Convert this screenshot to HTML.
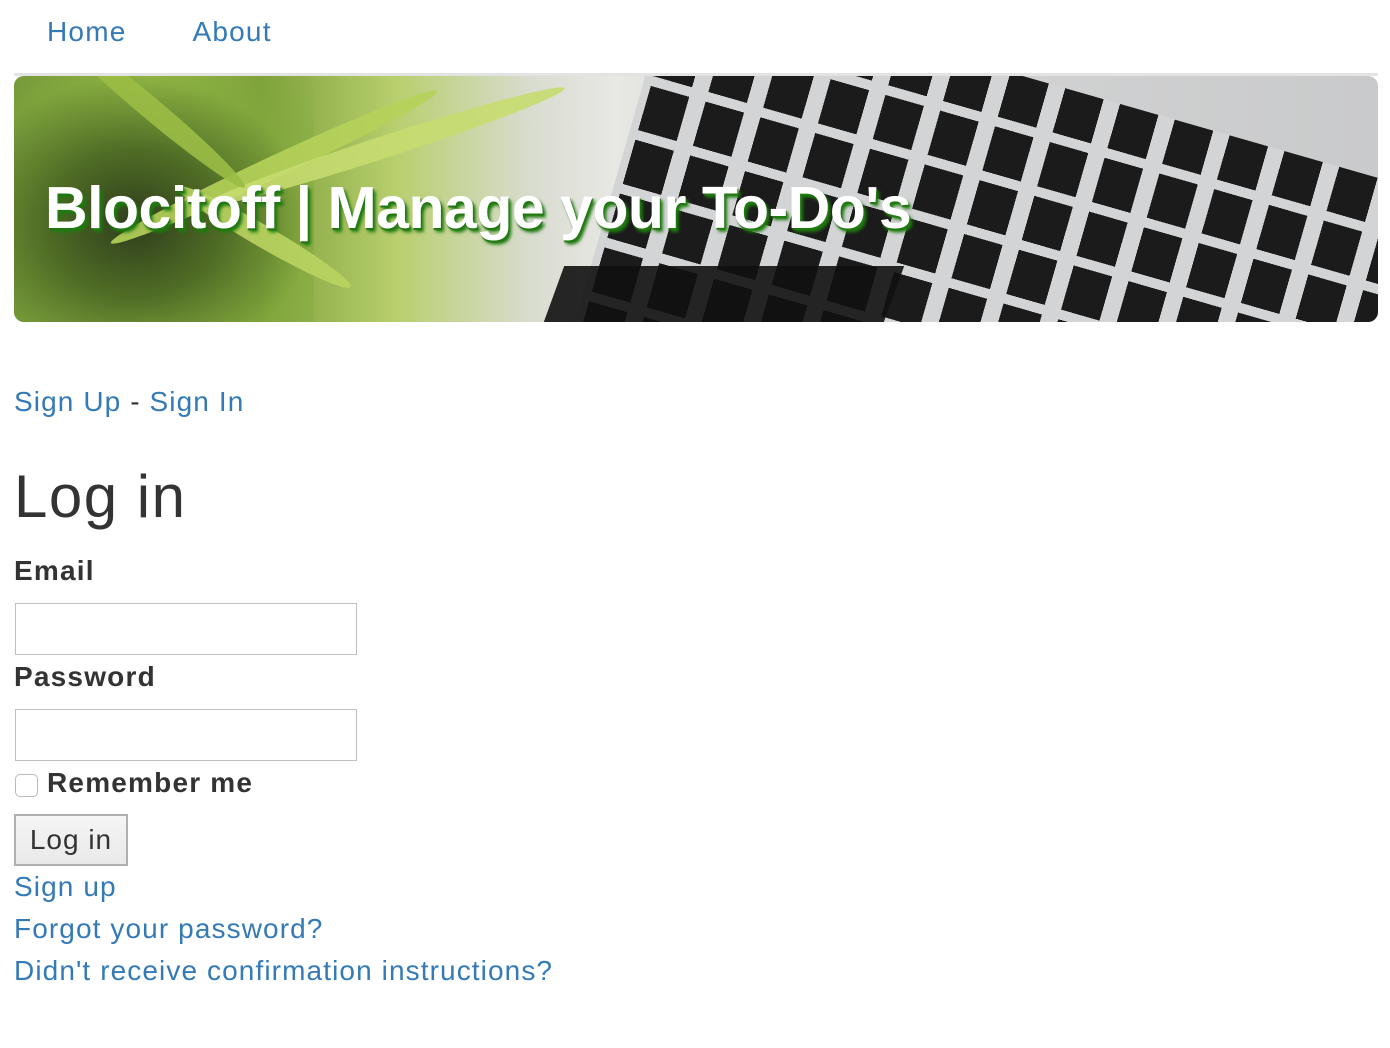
<!DOCTYPE html>
<html><head><meta charset="utf-8"><style>
body{margin:0;background:#fff;font-family:"Liberation Sans",Arial,sans-serif;color:#333;}
a{color:#337ab7;text-decoration:none}
.nav{position:absolute;top:16px;left:47px;font-size:28px;letter-spacing:1.2px}
.nav a{margin-right:66px}
.hr{position:absolute;top:73px;left:14px;width:1364px;height:3px;background:#e3e3e3}
.banner{position:absolute;top:76px;left:14px;width:1364px;height:246px;border-radius:10px;overflow:hidden;
background:linear-gradient(90deg,#6f8f3a 0%,#9fbf4a 10%,#7ea03b 18%,#b8cf6e 28%,#d9dcd0 38%,#e8e8e4 44%,#e2e3e1 47%,#d7d8d8 50%,#c9cacb 100%)}
.plant{position:absolute;left:0;top:0;width:300px;height:246px;background:radial-gradient(ellipse at 40% 60%,#2f3d1c 0%,#4f6c25 35%,rgba(130,170,60,.6) 70%,transparent 100%)}
.leaf{position:absolute;height:22px;background:#b5d15a;border-radius:50%;opacity:.9}
.kb{position:absolute;left:660px;top:-100px;width:900px;height:560px;transform:rotate(16deg);transform-origin:0 0;
background:repeating-linear-gradient(90deg,transparent 0 8px,#1b1b1b 8px 48px,transparent 48px 57px),#d3d4d6;}
.kbr{position:absolute;inset:0;background:repeating-linear-gradient(0deg,#d3d4d6 0 10px,transparent 10px 56px)}
.title{position:absolute;left:31px;top:98px;font-size:59px;font-weight:bold;color:#fff;letter-spacing:-0.5px;
text-shadow:3px 4px 3px #1f7a10,1px 2px 1px #2a6a15;white-space:nowrap}
.spiral{position:absolute;left:540px;top:190px;width:340px;height:56px;background:#111;transform:skewX(-20deg);opacity:.9}
.t{position:absolute;left:14px;font-size:28px;letter-spacing:1.1px}
h1{position:absolute;left:14px;top:462px;margin:0;font-size:60px;font-weight:normal;color:#333;letter-spacing:1.5px}
.lbl{position:absolute;left:14px;font-size:28px;font-weight:bold;color:#333;letter-spacing:1.2px}
.inp{position:absolute;left:15px;width:340px;height:50px;border:1px solid #bfbfbf;background:#fff}
.cb{position:absolute;left:15px;top:774px;width:21px;height:21px;border:1px solid #bbb;border-radius:5px;background:#fff}
.btn{position:absolute;left:14px;top:814px;width:110px;height:48px;border:2px solid #b0b0b0;background:linear-gradient(#f5f5f5,#e9e9e9);font-size:28px;color:#333;line-height:48px;text-align:center;letter-spacing:1px}
</style></head><body>
<div class="nav"><a>Home</a><a>About</a></div>
<div class="hr"></div>
<div class="banner">
  <div class="kb"><div class="kbr"></div></div>
  <div class="spiral"></div>
  <div class="plant"></div>
  <div class="leaf" style="left:80px;top:80px;width:360px;transform:rotate(-25deg)"></div>
  <div class="leaf" style="left:180px;top:60px;width:380px;transform:rotate(-18deg);background:#c6dc70"></div>
  <div class="leaf" style="left:10px;top:20px;width:250px;transform:rotate(40deg);background:#9bbd45"></div>
  <div class="leaf" style="left:150px;top:150px;width:200px;transform:rotate(30deg);background:#b9d460"></div>
  <div class="title">Blocitoff | Manage your To-Do's</div>
</div>
<div class="t" style="top:386px"><a>Sign Up</a> - <a>Sign In</a></div>
<h1>Log in</h1>
<div class="lbl" style="top:555px">Email</div>
<div class="inp" style="top:603px"></div>
<div class="lbl" style="top:661px">Password</div>
<div class="inp" style="top:709px"></div>
<div class="cb"></div>
<div class="lbl" style="left:47px;top:767px">Remember me</div>
<div class="btn">Log in</div>
<div class="t" style="top:871px"><a>Sign up</a></div>
<div class="t" style="top:913px"><a>Forgot your password?</a></div>
<div class="t" style="top:955px"><a>Didn't receive confirmation instructions?</a></div>
</body></html>
